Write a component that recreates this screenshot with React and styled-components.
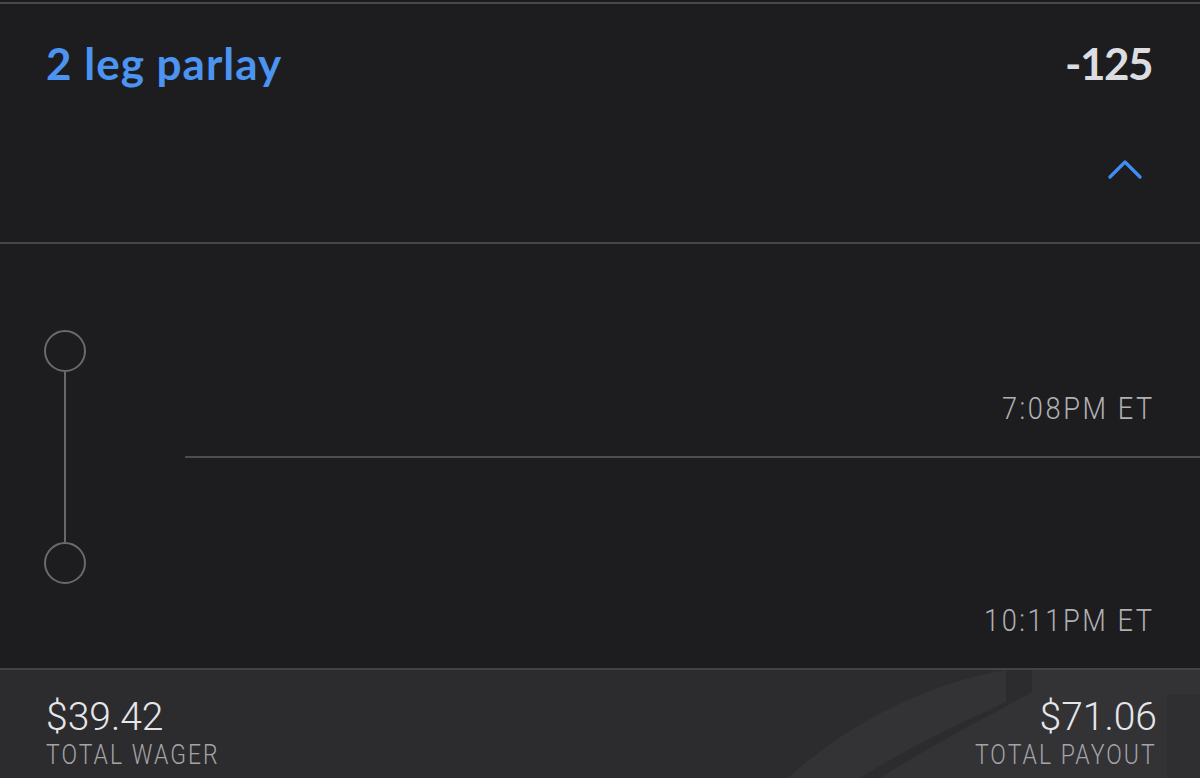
import React from "react";
import styled, { createGlobalStyle } from "styled-components";

const Global = createGlobalStyle`
  html, body { margin: 0; padding: 0; background: #1d1d1f; }
  body { font-family: "Lato", "Roboto", sans-serif; -webkit-font-smoothing: antialiased; }
`;

const Page = styled.div`
  width: 1200px;
  height: 778px;
  padding-top: 2px;
  box-sizing: border-box;
  background: #1b1b1d;
  display: flex;
  flex-direction: column;
  overflow: hidden;
`;

const Card = styled.div`
  flex: 1;
  display: flex;
  flex-direction: column;
  background: #1d1d1f;
  border-top: 2px solid #48484b;
`;

const Header = styled.div`
  height: 240px;
  box-sizing: border-box;
  border-bottom: 2px solid #464649;
  padding: 33px 48px 0 46px;
  display: flex;
  flex-direction: column;
`;

const TitleRow = styled.div`
  display: flex;
  justify-content: space-between;
  align-items: baseline;
`;

const Title = styled.div`
  font-family: "Lato", sans-serif;
  font-weight: 700;
  font-size: 44px;
  letter-spacing: 1px;
  color: #4b94f2;
  line-height: 52px;
`;

const Odds = styled.div`
  font-family: "Lato", sans-serif;
  font-weight: 700;
  font-size: 44px;
  color: #dcdde1;
  line-height: 52px;
  letter-spacing: -1.5px;
`;

const ChevronRow = styled.div`
  display: flex;
  justify-content: flex-end;
  margin-top: 70px;
  padding-right: 10px;
`;

const Legs = styled.div`
  display: flex;
  flex-direction: column;
`;

const LegRow = styled.div`
  display: grid;
  grid-template-columns: 185px 1fr;
  height: ${(p) => p.$h}px;
`;

const Timeline = styled.div`
  display: flex;
  flex-direction: column;
  align-items: center;
  width: 42px;
  margin-left: 44px;
`;

const Seg = styled.div`
  flex: 1;
  width: 2px;
  background: ${(p) => (p.$line ? "#68686b" : "transparent")};
`;

const Node = styled.div`
  width: 42px;
  height: 42px;
  box-sizing: border-box;
  border: 2px solid #6a6a6d;
  border-radius: 50%;
  flex: none;
`;

const LegBody = styled.div`
  display: flex;
  flex-direction: column;
  justify-content: flex-end;
  align-items: flex-end;
  padding: 0 48px ${(p) => p.$pb}px 0;
  border-bottom: ${(p) => (p.$divider ? "2px solid #4d4d50" : "none")};
`;

const Time = styled.div`
  font-family: "Roboto", sans-serif;
  font-weight: 300;
  font-size: 32px;
  letter-spacing: 3px;
  margin-right: -3px;
  color: #b0b0b4;
  line-height: 1;
  transform: scaleX(0.85);
  transform-origin: right center;
`;

const Footer = styled.div`
  position: relative;
  flex: 1;
  background: #2c2c2e;
  border-top: 2px solid #444447;
  padding: 27px 46px 0 46px;
  display: flex;
  justify-content: space-between;
  overflow: hidden;
`;

const Watermark = styled.svg`
  position: absolute;
  left: 0;
  top: 0;
  width: 1200px;
  height: 108px;
`;

const Stat = styled.div`
  position: relative;
  display: flex;
  flex-direction: column;
  align-items: ${(p) => (p.$right ? "flex-end" : "flex-start")};
`;

const Amount = styled.div`
  font-family: "Roboto", sans-serif;
  font-weight: 300;
  font-size: 39px;
  color: #e6e6ea;
  line-height: 40px;
  margin-right: ${(p) => (p.$right ? "-3px" : "0")};
`;

const Label = styled.div`
  font-family: "Roboto", sans-serif;
  font-weight: 300;
  font-size: 28px;
  letter-spacing: 2.5px;
  color: #a4a4a9;
  line-height: 30px;
  margin-top: 3px;
  margin-right: -2.5px;
  transform: scaleX(0.82);
  transform-origin: ${(p) => (p.$right ? "right" : "left")} center;
`;

function ChevronUp() {
  return (
    <svg width="34" height="20" viewBox="0 0 34 20" fill="none">
      <path d="M2 18 L17 3 L32 18" stroke="#3f8ef5" strokeWidth="3.2" strokeLinecap="round" strokeLinejoin="round" />
    </svg>
  );
}

export default function App() {
  return (
    <>
      <Global />
      <Page>
        <Card>
          <Header>
            <TitleRow>
              <Title>2 leg parlay</Title>
              <Odds>-125</Odds>
            </TitleRow>
            <ChevronRow>
              <ChevronUp />
            </ChevronRow>
          </Header>
          <Legs>
            <LegRow $h={214}>
              <Timeline>
                <Seg />
                <Node />
                <Seg $line />
              </Timeline>
              <LegBody $divider $pb={32}>
                <Time>7:08PM ET</Time>
              </LegBody>
            </LegRow>
            <LegRow $h={210}>
              <Timeline>
                <Seg $line />
                <Node />
                <Seg />
              </Timeline>
              <LegBody $pb={32}>
                <Time>10:11PM ET</Time>
              </LegBody>
            </LegRow>
          </Legs>
          <Footer>
            <Watermark viewBox="0 0 1200 108" preserveAspectRatio="none">
              <path d="M788 108 C 840 60 920 14 1006 0 L 1200 0 L 1200 108 Z" fill="#333336" />
              <path d="M1006 0 L1032 0 L1032 22 C 1000 40 940 70 880 108 L 860 108 C 920 70 990 40 1006 32 Z" fill="#2c2c2e" />
              <path d="M1167 24 L1200 24 L1200 108 L1167 108 Z" fill="#2f2f31" />
            </Watermark>
            <Stat>
              <Amount>$39.42</Amount>
              <Label>TOTAL WAGER</Label>
            </Stat>
            <Stat $right>
              <Amount $right>$71.06</Amount>
              <Label $right>TOTAL PAYOUT</Label>
            </Stat>
          </Footer>
        </Card>
      </Page>
    </>
  );
}
